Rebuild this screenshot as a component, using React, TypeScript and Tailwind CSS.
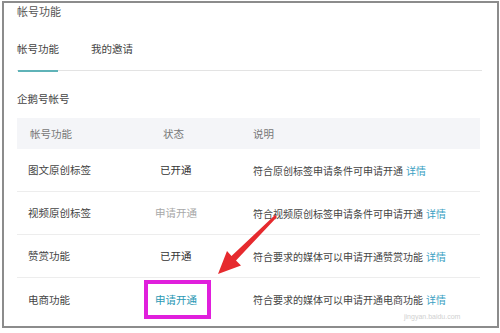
import React from "react";

const rows = [
  { name: "图文原创标签", status: "已开通", statusCls: "text-[#333333]", desc: "符合原创标签申请条件可申请开通" },
  { name: "视频原创标签", status: "申请开通", statusCls: "text-[#a8a8a8]", desc: "符合视频原创标签申请条件可申请开通" },
  { name: "赞赏功能", status: "已开通", statusCls: "text-[#333333]", desc: "符合要求的媒体可以申请开通赞赏功能" },
  { name: "电商功能", status: "申请开通", statusCls: "text-[#2a98b4]", desc: "符合要求的媒体可以申请开通电商功能" },
];

export default function App() {
  return (
    <div
      className="relative w-[500px] h-[333px] bg-white overflow-hidden"
      style={{ fontFamily: '"Noto Sans CJK SC", "Noto Sans", sans-serif' }}
    >
      <div className="ml-[2px] mt-[1px] w-[497px] h-[327px] border-2 border-[#8c8c8c] pl-[13px] pr-[15px] flex flex-col">
        <div className="h-[15px] leading-[15px] text-[11px] text-[#555555] mt-[1px] whitespace-nowrap">帐号功能</div>
        <div className="mt-[21px] h-[31px] border-b border-[#e3e3e3] flex items-start text-[10.5px] text-[#444444] whitespace-nowrap">
          <div className="w-[42px] h-[31px] flex flex-col items-center justify-between">
            <span className="leading-[16px] mt-[1px]">帐号功能</span>
            <div className="w-[40px] h-[2px] bg-[#5fb3b8] mb-[-1px]" />
          </div>
          <span className="ml-[32px] leading-[16px] mt-[1px]">我的邀请</span>
        </div>
        <div className="mt-[20px] h-[16px] leading-[16px] text-[10.5px] text-[#444444] whitespace-nowrap">企鹅号帐号</div>
        <div className="mt-[11px] w-[463px] text-[10.5px] whitespace-nowrap">
          <div className="h-[31px] bg-[#f4f5f8] flex items-center text-[#777777]">
            <span className="w-[138px] pl-[13px]">帐号功能</span>
            <span className="w-[98px] pl-[8px]">状态</span>
            <span>说明</span>
          </div>
          {rows.map((r, i) => (
            <div
              key={i}
              className={`h-[43px] flex items-center ${i < rows.length - 1 ? "border-b border-[#ededed]" : ""}`}
            >
              <span className="w-[138px] pl-[11px] text-[#444444]">{r.name}</span>
              <span className={`w-[98px] ${r.status === "已开通" ? "pl-[5px]" : "pl-0"} ${r.statusCls}`}>{r.status}</span>
              <span className="text-[10px] text-[#444444]">
                {r.desc}
                <span className="ml-[3px] text-[#3a9fc3]">详情</span>
              </span>
            </div>
          ))}
        </div>
      </div>

      {/* watermark */}
      <div
        className="absolute left-[404px] top-[312px] text-[7px] leading-[9px] text-[#d0d0d0] pointer-events-none"
        style={{ fontFamily: '"Liberation Sans", sans-serif' }}
      >
        jingyan.baidu.com
      </div>

      {/* highlight box */}
      <div className="absolute left-[144px] top-[280px] w-[67px] h-[39px] border-4 border-[#e01fdc]" />

      {/* arrow */}
      <svg className="absolute left-0 top-0" width="500" height="333" viewBox="0 0 500 333">
        <polygon
          points="218,274 241,265.5 236,260.5 277,217 275,215 231.5,256 227,251"
          fill="#e62a2e"
        />
      </svg>
    </div>
  );
}
